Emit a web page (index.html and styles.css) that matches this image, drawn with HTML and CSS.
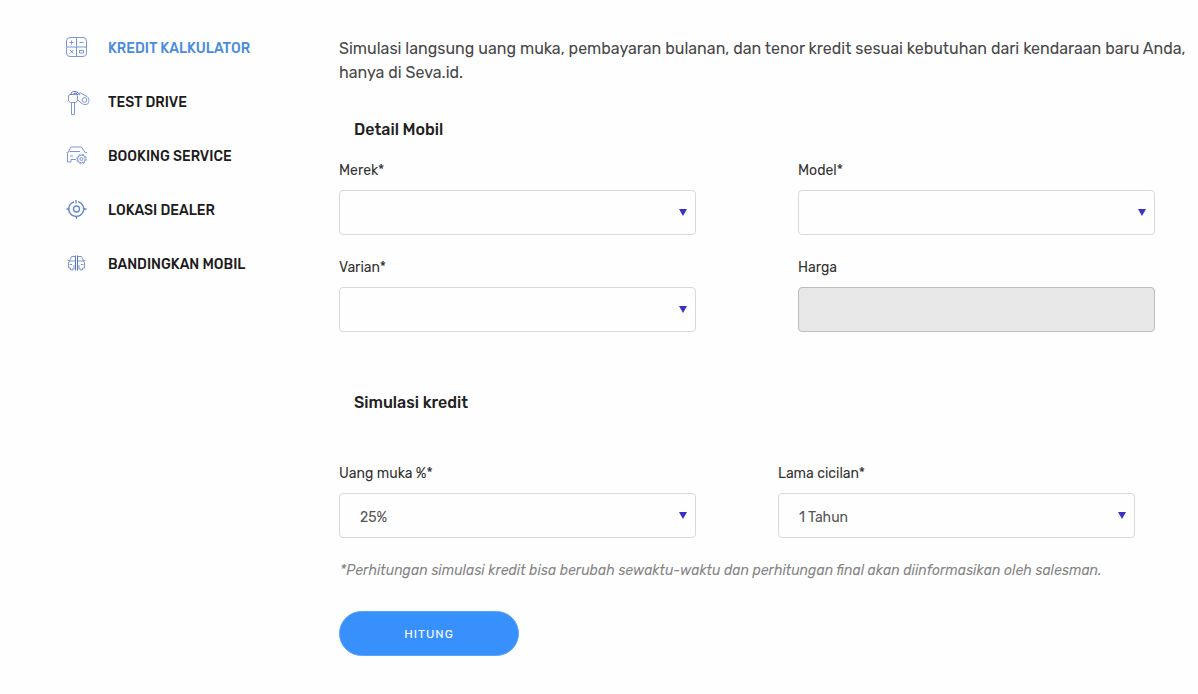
FILE: index.html
```html
<!DOCTYPE html>
<html lang="id">
<head>
    <meta charset="UTF-8">
    <meta name="viewport" content="width=device-width, initial-scale=1.0">
    <title>Kredit Kalkulator</title>
    <link rel="stylesheet" href="styles.css">
</head>
<body>

<div class="page">
    <!-- Menu samping -->
    <nav class="sidebar">
        <ul>
            <li>
                <a class="active" href="#kredit">
                    <svg class="icon" viewBox="0 0 24 24">
                        <rect x="1.500" y="1.500" width="20" height="19" rx="3.500"/>
                        <path d="M11.500 1.500v19M1.500 11h20M4.500 6.500h4M6.500 4.500v4M14.500 6.500h4M5 14l3.500 3.500M8.500 14L5 17.500M14.500 14.500h4v2.500h-4z"/>
                    </svg>
                    Kredit Kalkulator
                </a>
            </li>
            <li>
                <a href="#testdrive">
                    <svg class="icon" viewBox="0 0 24 24">
                        <path d="M4.500 4.500h7l1 1.500v5l-2 1.500h-5L3.500 11V6zM6.500 12.500v12h3v-12"/>
                        <path class="dark" d="M6 4.500C6 2 8 1 10 1.500l3 1 1.500 2.500M8 4.500l2-1.500 3 1.500"/>
                        <path d="M13.500 3.500l2-.5 6.500 3.500c2.500 2 2.500 5.500.5 7.500-2 1-4 .5-5.500-.5L12.500 10"/>
                        <circle cx="19.500" cy="10" r="2.300"/>
                    </svg>
                    Test Drive
                </a>
            </li>
            <li>
                <a href="#booking">
                    <svg class="icon" viewBox="0 0 24 24">
                        <path d="M11 15.500H6V18H2.500V9.500L6 3h10.500l4 6M2.500 8.500H1.500M4.500 7.500H15M5 12h3M20.500 8.500H22"/>
                        <circle cx="16.500" cy="15" r="4.800" stroke-dasharray="2 1.770"/>
                        <circle cx="16.500" cy="15" r="3.900"/>
                        <circle cx="16.500" cy="15" r="1.500"/>
                    </svg>
                    Booking Service
                </a>
            </li>
            <li>
                <a href="#dealer">
                    <svg class="icon target" viewBox="0 0 24 24">
                        <path d="M13 3.700a7.500 7.500 0 1 1-4 .1"/>
                        <circle cx="11.500" cy="11" r="3"/>
                        <path d="M11 2v3.500M11.500 18v3M1.500 11h3M18.500 11h3"/>
                    </svg>
                    Lokasi Dealer
                </a>
            </li>
            <li>
                <a href="#bandingkan">
                    <svg class="icon" viewBox="0 0 24 24">
                        <path d="M10 4.500H6.500L4.500 9 3.500 11v5h2v2h2.500v-2h2M4 9h6M2.500 8l2 1M4.500 12.500H7M8 14h2"/>
                        <path d="M13 4.500h3.500l2 4.500 1 2v5h-2v2H15v-2h-2M19 9h-6M20.500 8l-2 1M18.500 12.500H16M15 14h-2"/>
                        <path class="dark" d="M10.500 3.500v15M12.500 3.500v15"/>
                    </svg>
                    Bandingkan Mobil
                </a>
            </li>
        </ul>
    </nav>

    <!-- Form simulasi -->
    <main class="content">
        <p class="intro">Simulasi langsung uang muka, pembayaran bulanan, dan tenor kredit sesuai kebutuhan dari kendaraan baru Anda, hanya di Seva.id.</p>

        <form>
            <h2>Detail Mobil</h2>
            <div class="fields car-fields">
                <div class="field">
                    <label for="merek">Merek*</label>
                    <div class="select-box">
                        <select id="merek"><option></option></select>
                    </div>
                </div>
                <div class="field">
                    <label for="model">Model*</label>
                    <div class="select-box">
                        <select id="model"><option></option></select>
                    </div>
                </div>
                <div class="field">
                    <label for="varian">Varian*</label>
                    <div class="select-box">
                        <select id="varian"><option></option></select>
                    </div>
                </div>
                <div class="field">
                    <label for="harga">Harga</label>
                    <input type="text" id="harga" disabled>
                </div>
            </div>

            <h2 class="credit-title">Simulasi kredit</h2>
            <div class="fields credit-fields">
                <div class="field">
                    <label for="uangmuka">Uang muka %*</label>
                    <div class="select-box">
                        <select id="uangmuka"><option>25%</option></select>
                    </div>
                </div>
                <div class="field">
                    <label for="cicilan">Lama cicilan*</label>
                    <div class="select-box">
                        <select id="cicilan"><option>1 Tahun</option></select>
                    </div>
                </div>
            </div>

            <p class="note">*Perhitungan simulasi kredit bisa berubah sewaktu-waktu dan perhitungan final akan diinformasikan oleh salesman.</p>
            <button class="button" type="button">HITUNG</button>
        </form>
    </main>
</div>

</body>
</html>
```
FILE: styles.css
```css
/* Umum */
* {
    box-sizing: border-box;
}
body {
    font-family: Rubik, Roboto, "Liberation Sans", sans-serif;
    margin: 0;
    background-color: #fefefe;
    color: #222;
}
.page {
    display: flex;
    padding: 36px 12px 36px 65px;
}

/* Menu samping */
.sidebar {
    flex: 0 0 274px;
}
.sidebar ul {
    list-style: none;
    margin: 0;
    padding: 0;
    display: flex;
    flex-direction: column;
    gap: 30px;
}
.sidebar a {
    display: flex;
    align-items: center;
    gap: 19px;
    height: 24px;
    color: #1c1c1c;
    font-size: 14px;
    font-weight: 500;
    text-transform: uppercase;
    text-decoration: none;
}
.sidebar a.active {
    color: #4a8bdb;
}
.icon {
    width: 24px;
    height: 24px;
    fill: none;
    stroke: #7d96d8;
    stroke-width: 1;
    overflow: visible;
}
.icon .dark {
    stroke: #5673c8;
}
.icon.target {
    stroke: #5f88cc;
    stroke-width: 1.3;
}

/* Konten */
.content {
    flex: 1;
    min-width: 0;
    padding-top: 1px;
}
.intro {
    margin: 0;
    font-size: 16px;
    line-height: 24px;
    color: #484848;
}
h2 {
    margin: 33px 15px 19px;
    font-size: 16px;
    line-height: 24px;
    font-weight: 500;
}
.fields {
    display: grid;
    grid-template-columns: 1fr 1fr;
    row-gap: 23px;
}
.car-fields {
    column-gap: 102px;
    padding-right: 31px;
}
.credit-fields {
    column-gap: 82px;
    padding-right: 51px;
}
.credit-title {
    margin-top: 59px;
    margin-bottom: 49px;
}
.field label {
    display: block;
    margin-bottom: 9px;
    font-size: 14px;
    line-height: 20px;
    color: #333;
}
.select-box {
    position: relative;
}
.select-box::after {
    content: "";
    position: absolute;
    right: 9px;
    top: 19px;
    border: 4px solid transparent;
    border-top: 7px solid #3a32c4;
    border-bottom: 0;
    pointer-events: none;
}
.field select,
.field input {
    display: block;
    width: 100%;
    height: 45px;
    padding: 4px 20px 0;
    border: 1px solid #d8d8d8;
    border-radius: 4px;
    background-color: #fefefe;
    color: #555;
    font-family: inherit;
    font-size: 14px;
    appearance: none;
}
.field input:disabled {
    background-color: #e7e7e7;
    border-color: #bdbdbd;
}
.note {
    margin: 23px 0 30px 1px;
    font-size: 14px;
    line-height: 20px;
    font-style: oblique 12deg;
    color: #858585;
}

/* Tombol */
.button {
    display: block;
    width: 180px;
    height: 45px;
    border: 1px solid #5ba4fb;
    border-radius: 23px;
    background-color: #3890fc;
    color: #fff;
    font-family: inherit;
    font-size: 12px;
    font-weight: 400;
    letter-spacing: 1px;
    cursor: pointer;
}
```
